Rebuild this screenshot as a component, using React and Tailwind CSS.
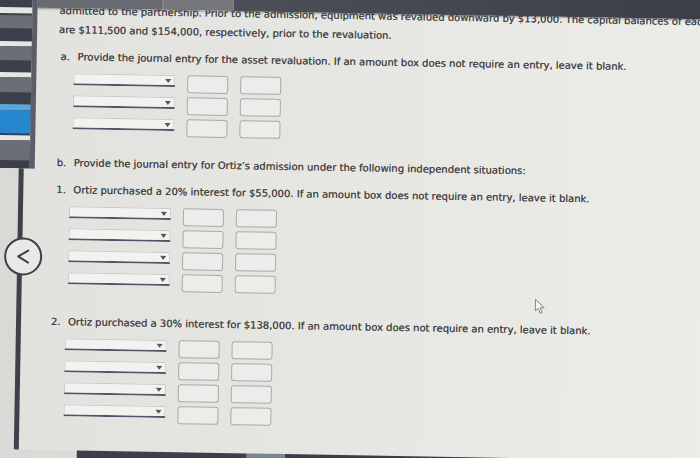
import React from "react";

// dropdown for the account name
const AccountSelect = () => (
  <div className="relative h-[12px] w-[102px] shrink-0 rounded-t-[2px] border border-b-2 border-[#c9c9c6] border-b-[#4f5566] bg-[#f2f2f0]">
    <span className="absolute right-[3px] top-[3px] h-0 w-0 border-x-[3px] border-t-[4px] border-x-transparent border-t-[#555]" />
  </div>
);

const AmountBox = () => (
  <div className="h-[18px] w-[41px] shrink-0 rounded-[3px] border-[1.5px] border-[#a9a9a7] bg-[#ececea]" />
);

const EntryRow = () => (
  <div className="flex items-start gap-[12px]">
    <AccountSelect />
    <AmountBox />
    <AmountBox />
  </div>
);

const JournalEntry = ({ rows, className = "" }) => (
  <div className={"mt-[9px] flex flex-col gap-[4px] pl-[13px] " + className}>
    {Array.from({ length: rows }).map((_, i) => (
      <EntryRow key={i} />
    ))}
  </div>
);

const Label = ({ children }) => <span className="inline-block w-[17px]">{children}</span>;

const App = () => {
  return (
    <div className="h-[458px] w-[700px] overflow-hidden bg-[#dadad6] font-['DejaVu_Sans',Verdana,sans-serif]">
      <div className="-mt-[20px] flex h-[480px] w-[720px] origin-top-left rotate-[1deg] bg-gradient-to-r from-[#e1e1dd] via-[#e6e6e2] to-[#ecece9]">
        {/* left navigation column */}
        <div className="flex w-[38px] shrink-0 flex-col">
          <div className="flex h-[188px] shrink-0">
            <div className="flex w-[33px] flex-col bg-[#3c3f4a]">
              <div className="h-[27px]" />
              <div className="h-[6px] bg-[#e6e6e4]" />
              <div className="h-[2px]" />
              <div className="h-[13px] bg-[#6b6e76]" />
              <div className="h-[13px]" />
              <div className="h-[5px] bg-[#e6e6e4]" />
              <div className="h-[14px] bg-[#6b6e76]" />
              <div className="h-[12px]" />
              <div className="h-[5px] bg-[#e6e6e4]" />
              <div className="h-[15px] bg-[#6b6e76]" />
              <div className="h-[12px]" />
              <div className="h-[6px] bg-[#58a8dd]" />
              <div className="h-[23px] bg-[#2787ce]" />
              <div className="h-[2px]" />
              <div className="h-[5px] bg-[#e6e6e4]" />
              <div className="h-[20px] bg-[#6b6e76]" />
              <div className="h-[8px]" />
            </div>
            <div className="w-[5px] bg-[#5a5e68]" />
          </div>
          <div className="relative flex h-[281px] shrink-0">
            <div className="w-[22px] bg-[#d9d9d5]" />
            <div className="w-[5px] bg-[#3d414c]" />
            <div className="flex-1" />
            <button className="absolute left-[9px] top-[69px] z-20 flex h-[38px] w-[38px] items-center justify-center rounded-full border-2 border-[#3b3f4b] bg-[#e9e9e6]">
              <svg width="14" height="16" viewBox="0 0 14 16" fill="none">
                <polyline points="12,2 2,8 12,14" stroke="#3b3f4b" strokeWidth="2" strokeLinecap="round" strokeLinejoin="round" />
              </svg>
            </button>
          </div>
          <div className="flex-1 bg-[#d9d9d5]" />
        </div>

        {/* question panel */}
        <div className="flex min-w-0 flex-1 flex-col">
          <div className="relative z-10 flex h-[27px] shrink-0 shadow-[0_1px_2px_rgba(60,60,70,0.5)]">
            <div className="w-[125px] bg-[#686a71]" />
            <div className="w-px bg-[#55575d]" />
            <div className="w-[70px] bg-[#75777d]" />
            <div className="flex-1 bg-gradient-to-r from-[#4c4f58] to-[#3b3e47]" />
          </div>

          <div className="relative -mt-[7.5px] min-h-0 flex-1 overflow-hidden pl-[22px] text-[10px] text-[#454545] [text-shadow:0_0_0.5px_#555]">
            <p className="whitespace-nowrap leading-[19px]">
              admitted to the partnership. Prior to the admission, equipment was revalued downward by $13,000. The capital balances of each partner
            </p>
            <p className="whitespace-nowrap leading-[19px]">
              are $111,500 and $154,000, respectively, prior to the revaluation.
            </p>

            <p className="ml-[2px] mt-[11px] whitespace-nowrap leading-[14px]">
              <Label>a.</Label>Provide the journal entry for the asset revaluation. If an amount box does not require an entry, leave it blank.
            </p>
            <JournalEntry rows={3} className="ml-[2px]" />

            <p className="mt-[21px] whitespace-nowrap leading-[14px]">
              <Label>b.</Label>Provide the journal entry for Ortiz’s admission under the following independent situations:
            </p>
            <p className="mt-[13px] whitespace-nowrap leading-[14px]">
              <Label>1.</Label>Ortiz purchased a 20% interest for $55,000. If an amount box does not require an entry, leave it blank.
            </p>
            <JournalEntry rows={4} />

            <p className="-ml-[3px] mt-[25px] whitespace-nowrap leading-[14px]">
              <Label>2.</Label>Ortiz purchased a 30% interest for $138,000. If an amount box does not require an entry, leave it blank.
            </p>
            <JournalEntry rows={4} className="-ml-[2px]" />

            {/* mouse pointer */}
            <svg className="absolute left-[502px] top-[289px]" width="12" height="16" viewBox="0 0 12 16" fill="none">
              <path d="M1 1 L1 12.5 L3.8 10 L6 14.8 L8 13.9 L5.9 9.3 L9.8 9.3 Z" fill="#f2f2f0" stroke="#777" strokeWidth="0.9" strokeLinejoin="round" />
            </svg>
          </div>

          <div className="flex h-[11px] shrink-0">
            <div className="w-[47px] bg-[#dadad6]" />
            <div className="w-[170px] bg-[#3c404b]" />
            <div className="w-[38px] bg-[#7b8590]" />
            <div className="flex-1 bg-[#3a3e49]" />
          </div>
        </div>
      </div>
    </div>
  );
};

export default App;
